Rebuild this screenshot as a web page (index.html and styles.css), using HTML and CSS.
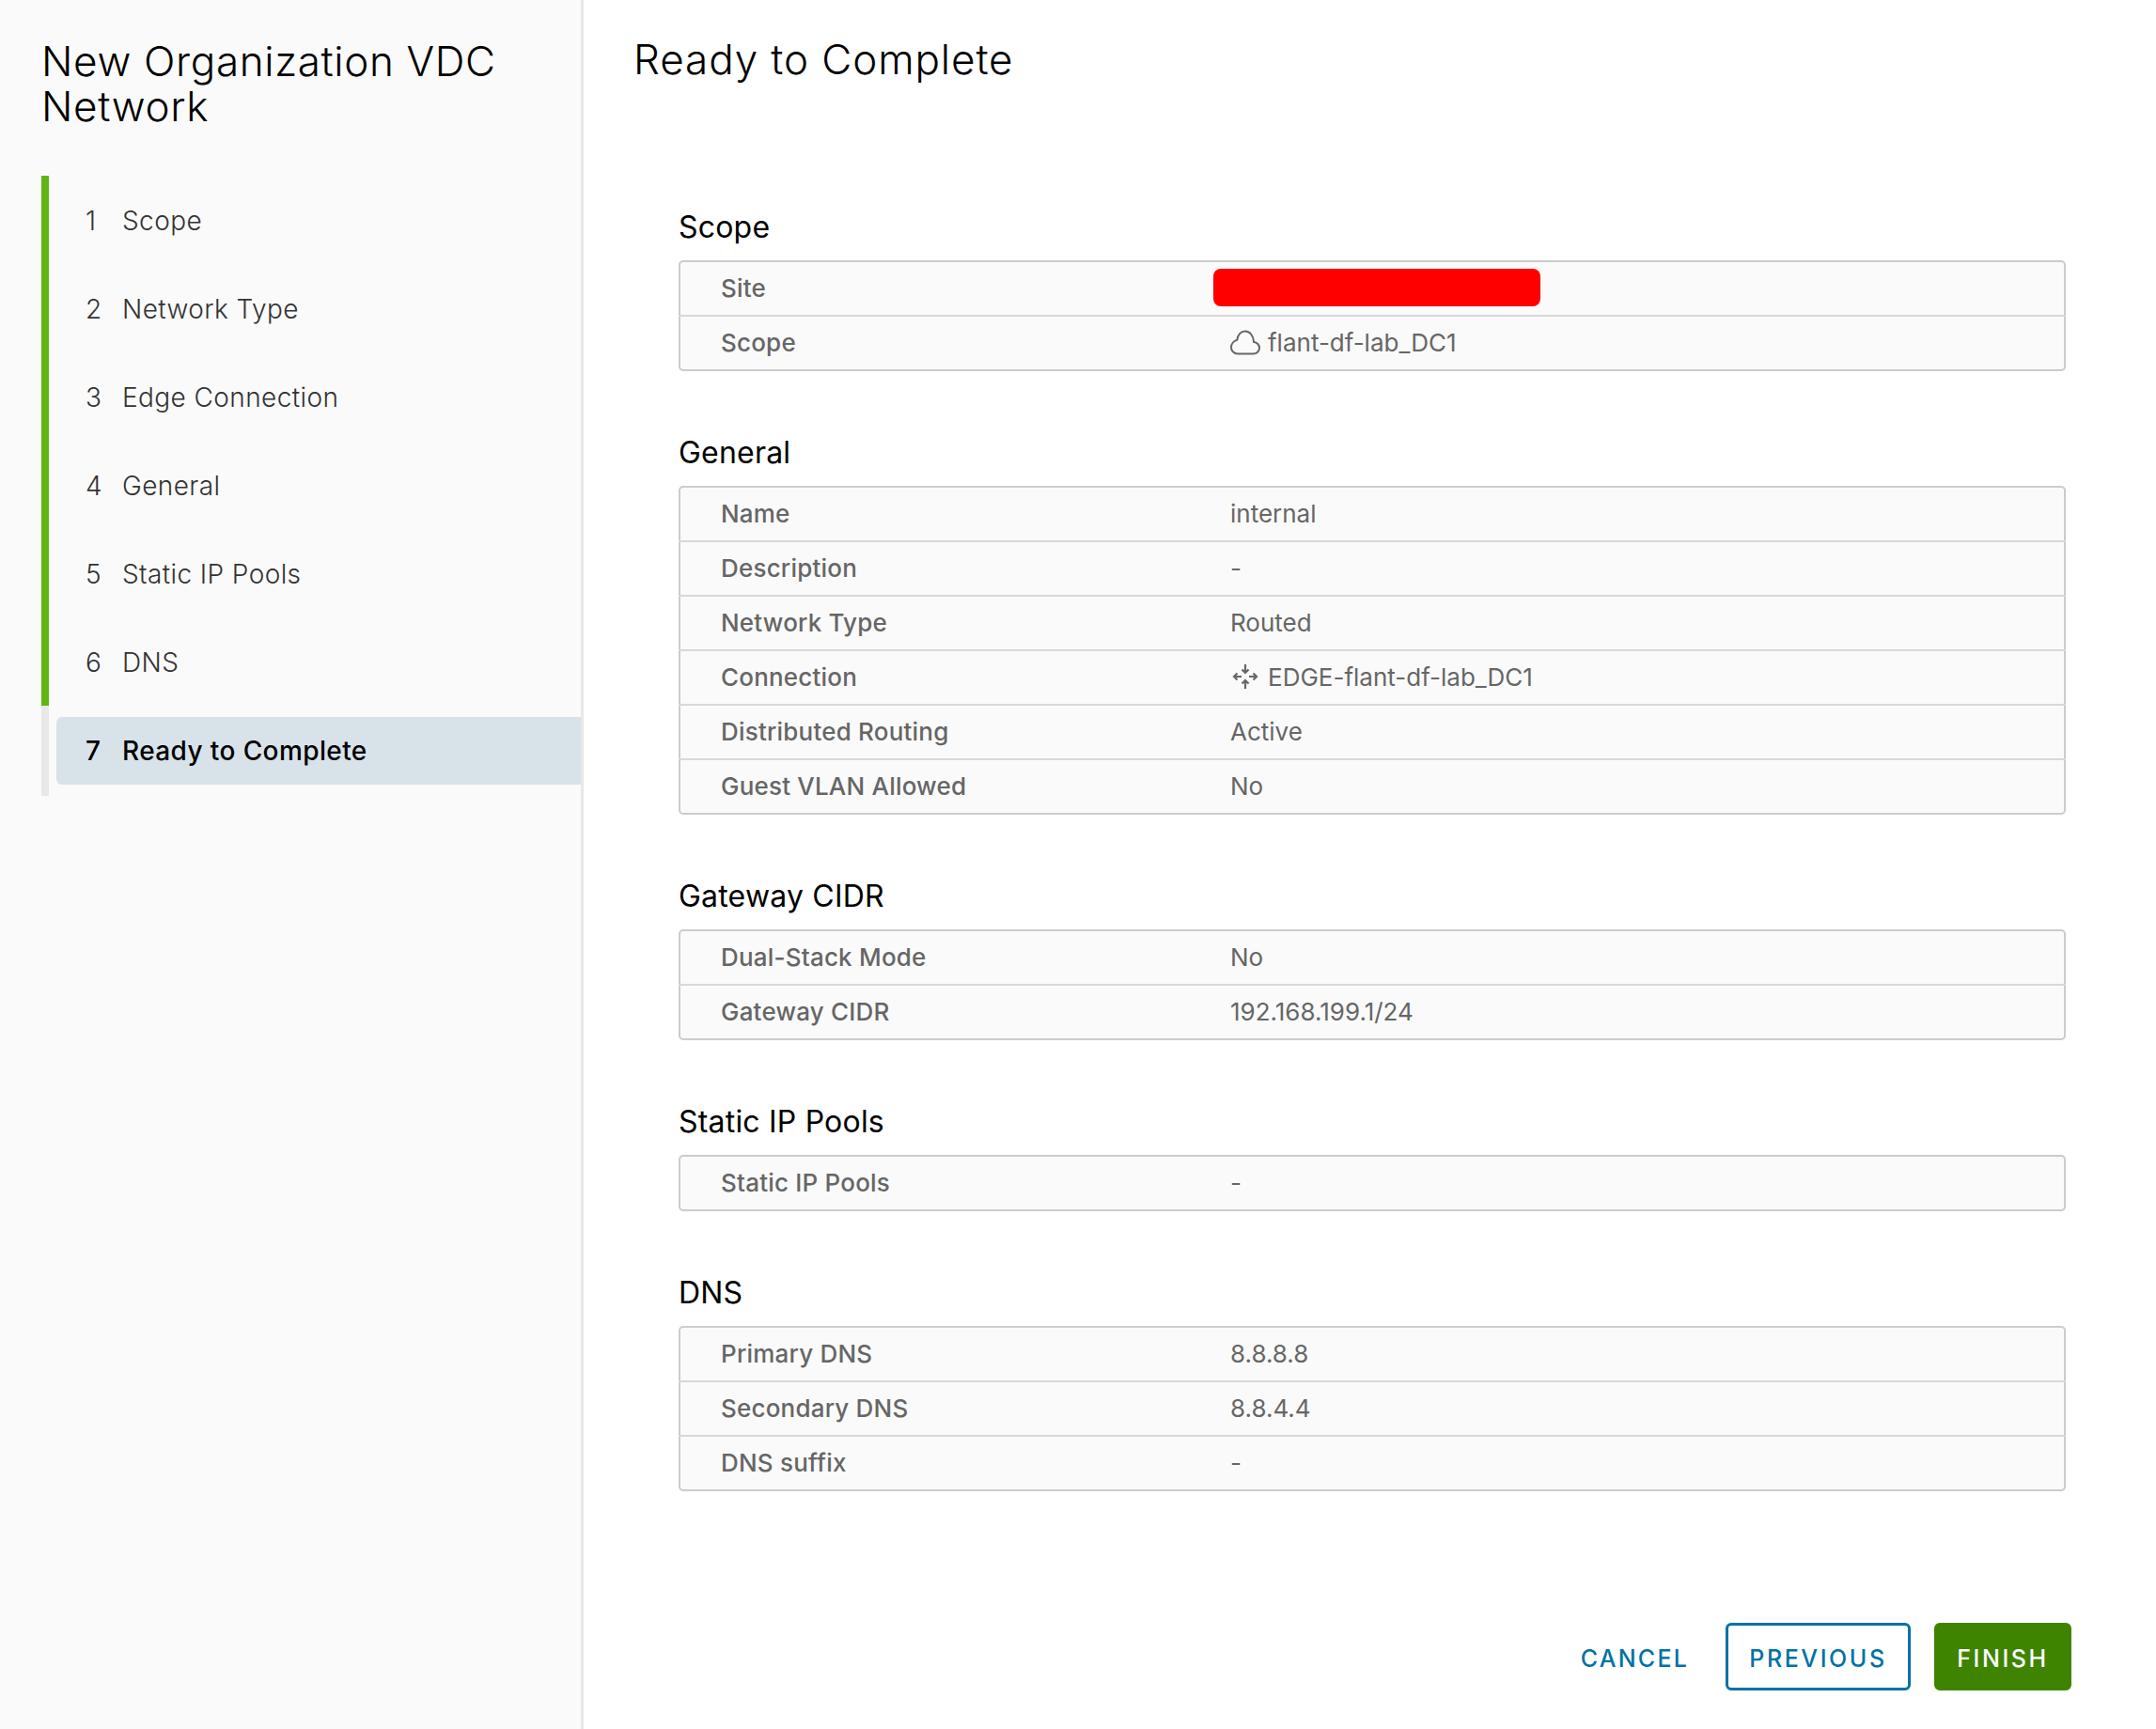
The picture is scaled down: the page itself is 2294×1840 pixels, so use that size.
FILE: index.html
```html
<!DOCTYPE html>
<html lang="en">
<head>
<meta charset="utf-8">
<title>New Organization VDC Network</title>
<link rel="stylesheet" href="styles.css">
</head>
<body>
<aside class="sidebar">
  <h1 class="wizard-title">New Organization VDC Network</h1>
  <ol class="steps">
    <li class="step done"><span class="step-link"><span class="num">1</span><span>Scope</span></span></li>
    <li class="step done"><span class="step-link"><span class="num">2</span><span>Network Type</span></span></li>
    <li class="step done"><span class="step-link"><span class="num">3</span><span>Edge Connection</span></span></li>
    <li class="step done"><span class="step-link"><span class="num">4</span><span>General</span></span></li>
    <li class="step done"><span class="step-link"><span class="num">5</span><span>Static IP Pools</span></span></li>
    <li class="step done"><span class="step-link"><span class="num">6</span><span>DNS</span></span></li>
    <li class="step active"><span class="step-link"><span class="num">7</span><span>Ready to Complete</span></span></li>
  </ol>
</aside>
<main class="main">
  <h2 class="page-title">Ready to Complete</h2>
  <div class="sections">
    <section class="section">
      <h3 class="section-title">Scope</h3>
      <div class="table">
        <div class="row"><span class="label">Site</span><span class="value"><span class="redact"></span></span></div>
        <div class="row"><span class="label">Scope</span><span class="value">
          <svg class="icon" width="32" height="27" viewBox="0 0 32 27" fill="none" stroke="#666" stroke-width="2"><path d="M8 25.500h16.500c3.600 0 6.500-2.700 6.500-6.200 0-3.300-2.600-6-5.900-6.200C24.600 6.300 21 1.500 16 1.500c-4.700 0-8.300 4-8.700 9.300C3.900 11.700 1 14.900 1 18.700c0 3.800 3.100 6.800 7 6.800z"/></svg>flant-df-lab_DC1</span></div>
      </div>
    </section>
    <section class="section">
      <h3 class="section-title">General</h3>
      <div class="table">
        <div class="row"><span class="label">Name</span><span class="value">internal</span></div>
        <div class="row"><span class="label">Description</span><span class="value">-</span></div>
        <div class="row"><span class="label">Network Type</span><span class="value">Routed</span></div>
        <div class="row"><span class="label">Connection</span><span class="value">
          <svg class="icon" width="32" height="28" viewBox="-2 0 32 28" fill="none" stroke="#666" stroke-width="2.200"><path d="M14 1v9M10.500 6.500 14 10l3.500-3.500M14 27v-9M10.500 21.500 14 18l3.500 3.500M1.500 14H10M5.500 10.500 2 14l3.500 3.500M26.500 14H18M22.500 10.500 26 14l-3.500 3.500"/></svg>EDGE-flant-df-lab_DC1</span></div>
        <div class="row"><span class="label">Distributed Routing</span><span class="value">Active</span></div>
        <div class="row"><span class="label">Guest VLAN Allowed</span><span class="value">No</span></div>
      </div>
    </section>
    <section class="section">
      <h3 class="section-title">Gateway CIDR</h3>
      <div class="table">
        <div class="row"><span class="label">Dual-Stack Mode</span><span class="value">No</span></div>
        <div class="row"><span class="label">Gateway CIDR</span><span class="value">192.168.199.1/24</span></div>
      </div>
    </section>
    <section class="section">
      <h3 class="section-title">Static IP Pools</h3>
      <div class="table">
        <div class="row"><span class="label">Static IP Pools</span><span class="value">-</span></div>
      </div>
    </section>
    <section class="section">
      <h3 class="section-title">DNS</h3>
      <div class="table">
        <div class="row"><span class="label">Primary DNS</span><span class="value">8.8.8.8</span></div>
        <div class="row"><span class="label">Secondary DNS</span><span class="value">8.8.4.4</span></div>
        <div class="row"><span class="label">DNS suffix</span><span class="value">-</span></div>
      </div>
    </section>
  </div>
  <footer class="actions">
    <button class="btn btn-link">CANCEL</button>
    <button class="btn btn-outline">PREVIOUS</button>
    <button class="btn btn-success">FINISH</button>
  </footer>
</main>
</body>
</html>
```

FILE: styles.css
```css
* { box-sizing: border-box; }
html, body { margin: 0; padding: 0; height: 100%; }
body {
  display: flex;
  height: 1840px;
  overflow: hidden;
  background: #fff;
  font-family: "Inter", "Liberation Sans", sans-serif;
  color: #000;
}
.sidebar {
  flex: 0 0 621px;
  background: #fafafa;
  border-right: 3px solid #e8e8e8;
  padding: 41px 0 0 44px;
}
.wizard-title {
  margin: 0 0 50px;
  font-size: 44px;
  line-height: 48px;
  font-weight: 300;
  letter-spacing: 0.65px;
  width: 520px;
  color: #000;
}
.steps { list-style: none; margin: 0; padding: 0; }
.step {
  height: 94px;
  border-left: 8px solid #60b515;
  padding: 11px 0 11px 8px;
  display: flex;
}
.step.active {
  height: 96px;
  border-left-color: #e8e8e8;
  padding: 12px 0 12px 8px;
}
.step-link {
  flex: 1;
  display: flex;
  align-items: center;
  font-size: 28px;
  letter-spacing: 0.4px;
  font-weight: 300;
  color: #333;
  padding: 2px 0 0 30px;
  border-radius: 6px 0 0 6px;
}
.step.active .step-link {
  background: #d8e3e9;
  color: #000;
  font-weight: 500;
  padding-top: 0;
}
.num { width: 40px; padding-left: 1px; }
.main {
  flex: 1;
  display: flex;
  flex-direction: column;
  padding: 0 90px 41px 53px;
}
.page-title {
  margin: 38px 0 0;
  font-size: 44px;
  line-height: 50px;
  font-weight: 300;
  letter-spacing: 0.9px;
}
.sections { margin: 134px 0 0 48px; width: 1476px; }
.section-title {
  margin: 0 0 15px;
  font-size: 32px;
  line-height: 40px;
  font-weight: 400;
  letter-spacing: 0.2px;
  color: #000;
}
.section { margin-bottom: 67px; }
.table {
  padding: 2px 0 0;
  border-radius: 5px;
  background: #fafafa;
  box-shadow: inset 0 0 0 2px #ccc;
}
.row {
  height: 58px;
  display: flex;
  align-items: center;
  padding-bottom: 2px;
  border-bottom: 2px solid #d8d8d8;
  font-size: 26px;
  color: #666;
}
.row:last-child { border-bottom-color: transparent; }
.label { width: 587px; padding-left: 45px; font-weight: 500; letter-spacing: 0.2px; }
.value { display: flex; align-items: center; font-weight: 400; }
.icon { margin-right: 8px; flex: none; }
.redact {
  display: block;
  width: 348px;
  height: 40px;
  margin-left: -18px;
  background: #f00;
  border-radius: 8px;
}
.actions {
  margin-top: auto;
  display: flex;
  justify-content: flex-end;
  align-items: center;
  gap: 25px;
}
.btn {
  height: 72px;
  font-family: inherit;
  font-size: 25px;
  font-weight: 500;
  letter-spacing: 2.6px;
  border-radius: 6px;
  cursor: pointer;
  background: transparent;
  border: 3px solid transparent;
  color: #0072a3;
  padding-top: 3px;
}
.btn-link { padding: 3px 11px 0; letter-spacing: 2.2px; }
.btn-outline { width: 197px; padding: 3px 0 0; border-color: #0072a3; }
.btn-success { width: 146px; padding: 3px 0 0; background: #3f8400; border-color: #3f8400; color: #fff; }
```
